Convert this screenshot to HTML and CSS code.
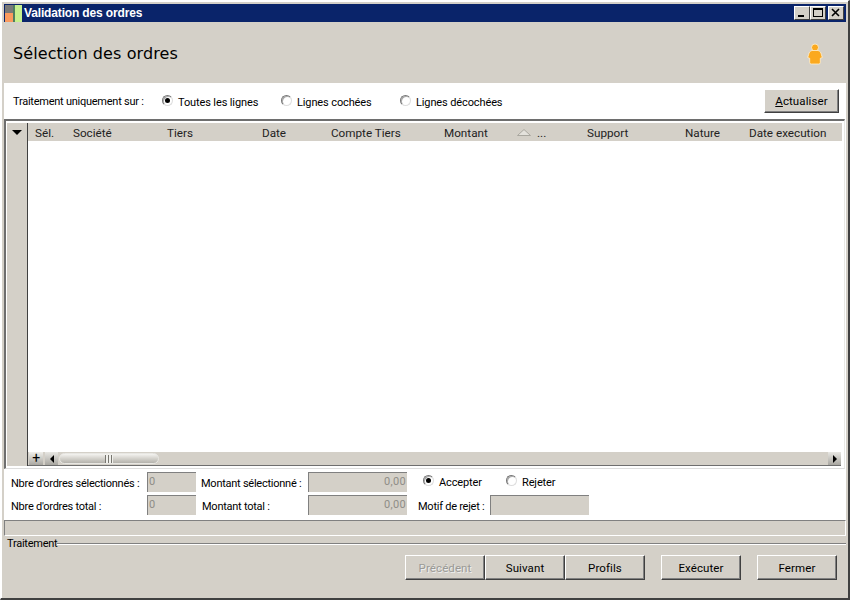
FILE: index.html
```html
<!DOCTYPE html>
<html lang="fr">
<head>
<meta charset="utf-8">
<title>Validation des ordres</title>
<link rel="stylesheet" href="styles.css">
</head>
<body>
<div class="window">
  <div class="titlebar">
    <svg class="appicon" width="17" height="17" viewBox="0 0 17 17"><rect width="8" height="8" fill="#7a7a78"/><rect y="8" width="8" height="9" fill="#fb9a5e"/><rect x="8" width="3" height="17" fill="#4f7f5f"/><rect x="10" width="7" height="17" fill="#c6f08e"/></svg>
    <span class="title">Validation des ordres</span>
    <div class="wincontrols">
      <span class="wbtn"><svg width="16" height="14" viewBox="0 0 16 14"><rect x="4" y="9" width="6" height="2" fill="#000"/></svg></span>
      <span class="wbtn"><svg width="16" height="14" viewBox="0 0 16 14"><rect x="3.5" y="2.500" width="9" height="8" fill="none" stroke="#000"/><rect x="3" y="2" width="10" height="2" fill="#000"/></svg></span>
      <span class="wbtn wbtn-close"><svg width="16" height="14" viewBox="0 0 16 14"><path d="M4 3l7 7M11 3l-7 7" stroke="#000" stroke-width="1.6" fill="none"/></svg></span>
    </div>
  </div>
  <div class="header">
    <h1>Sélection des ordres</h1>
    <svg class="person" width="18" height="22" viewBox="0 0 18 22"><circle cx="9" cy="4.500" r="3.500" fill="#fba91f" stroke="#fff0d0" stroke-width=".8"/><path d="M6 7.500h6c2 .5 3 2 3.300 3.800l1 3.200-2 .8v4.200a1.500 1.500 0 0 1-1.500 1.500H5.200a1.500 1.500 0 0 1-1.500-1.500v-4.200l-2-.8 1-3.200C3 9.500 4 8 6 7.500z" fill="#fba91f" stroke="#fff0d0" stroke-width=".8"/></svg>
  </div>
  <div class="main">
    <div class="options">
      <span class="opt-label">Traitement uniquement sur :</span>
      <label class="radio radio-a"><span class="dot on"></span>Toutes les lignes</label>
      <label class="radio radio-b"><span class="dot"></span>Lignes cochées</label>
      <label class="radio radio-c"><span class="dot"></span>Lignes décochées</label>
      <button class="btn btn-refresh"><u>A</u>ctualiser</button>
    </div>
    <div class="grid">
      <div class="gutter"><span class="menu-tri"></span></div>
      <div class="table">
        <div class="thead">
          <span>Sél.</span><span>Société</span><span>Tiers</span><span>Date</span><span>Compte Tiers</span><span>Montant</span>
          <span class="sort"><svg width="14" height="7" viewBox="0 0 14 7"><path d="M7 .5L13.500 6.500H.5z" fill="#e4e2dc" stroke="#a9a79f"/></svg></span><span class="more">...</span><span>Support</span><span>Nature</span><span>Date execution</span>
        </div>
        <div class="tbody"></div>
        <div class="hscroll">
          <span class="plus">+</span>
          <span class="sbtn"><i class="arrow-left"></i></span>
          <span class="thumb"><i></i></span>
          <span class="sbtn sbtn-right"><i class="arrow-right"></i></span>
        </div>
      </div>
    </div>
    <div class="form">
      <span class="lbl">Nbre d'ordres sélectionnés :</span>
      <span class="field">0</span>
      <span class="lbl lbl-m1">Montant sélectionné :</span>
      <span class="field num">0,00</span>
      <div class="decision">
        <label class="radio radio-acc"><span class="dot on"></span>Accepter</label>
        <label class="radio"><span class="dot"></span>Rejeter</label>
      </div>
      <span class="lbl">Nbre d'ordres total :</span>
      <span class="field">0</span>
      <span class="lbl lbl-m2">Montant total :</span>
      <span class="field num">0,00</span>
      <span class="lbl lbl-motif">Motif de rejet :</span>
      <span class="field"></span>
    </div>
  </div>
  <div class="status"></div>
  <div class="group"><span>Traitement</span><i></i></div>
  <div class="actions">
    <button class="btn btn-act" disabled>Précédent</button>
    <button class="btn btn-act">Suivant</button>
    <button class="btn btn-act">Profils</button>
    <button class="btn btn-act btn-gap">Exécuter</button>
    <button class="btn btn-act btn-gap">Fermer</button>
  </div>
</div>
</body>
</html>
```
FILE: styles.css
```css
* { box-sizing: border-box; }
html, body { margin: 0; padding: 0; }
body { width: 850px; height: 600px; overflow: hidden; background: #d4d0c8; font: 11px Roboto, "Liberation Sans", Arial, sans-serif; letter-spacing: -.25px; color: #000; }
.window { width: 850px; height: 600px; display: flex; flex-direction: column; background: #d4d0c8; border-style: solid; border-width: 1px 2px 2px 1px; border-color: #fff #404040 #404040 #fff; box-shadow: inset 1px 1px 0 #fff; padding: 3px 2px 0 3px; }
.titlebar { height: 18px; flex: none; display: flex; align-items: center; background: #0a246a; color: #fff; padding: 0 2px 0 1px; }
.appicon { flex: none; }
.title { font: bold 12px "Liberation Sans", Arial, sans-serif; letter-spacing: -.15px; margin-left: 2px; }
.wincontrols { margin-left: auto; display: flex; }
.wbtn { width: 16px; height: 14px; background: #d4d0c8; border: 1px solid; border-color: #fff #404040 #404040 #fff; display: flex; align-items: center; justify-content: center; overflow: hidden; }
.wbtn svg { flex: none; }
.wbtn-close { margin-left: 2px; }
.header { height: 61px; flex: none; display: flex; align-items: center; justify-content: space-between; padding: 0 22px 0 9px; }
h1 { margin: 1px 0 0; font: normal 16px "DejaVu Sans", sans-serif; letter-spacing: .1px; }
.person { margin-top: 2px; }
.main { height: 437px; flex: none; background: #fff; display: flex; flex-direction: column; }
.options { height: 36px; flex: none; display: flex; align-items: center; padding: 0 7px 0 9px; }
.opt-label { width: 149px; margin-top: 1px; white-space: nowrap; }
.radio { display: inline-flex; align-items: center; padding-top: 3px; white-space: nowrap; letter-spacing: -.12px; }
.radio-a { width: 119px; }
.radio-b { width: 119px; }
.dot { width: 11px; height: 11px; border-radius: 50%; border: 1px solid; border-color: #777 #ddd #ddd #777; box-shadow: inset 1px 1px 0 #aaa; margin-right: 5px; margin-top: -5px; position: relative; background: #fff; flex: none; }
.dot.on::after { content: ""; position: absolute; left: 2px; top: 2px; width: 5px; height: 5px; border-radius: 50%; background: #000; }
.btn { font: 11.5px Roboto, "Liberation Sans", Arial, sans-serif; letter-spacing: .1px; background: #d4d0c8; color: #000; border: 1px solid; border-color: #fff #404040 #404040 #fff; box-shadow: inset -1px -1px 0 #808080; padding: 0; }
.btn:disabled { color: #9a9a96; text-shadow: 1px 1px 0 #eee; }
.btn-refresh { margin-left: auto; width: 75px; height: 24px; }
.grid { height: 350px; flex: none; display: flex; margin-right: 1px; padding: 2px 2px 2px 1px; border-top: 2px solid #6e6e6e; border-left: 2px solid #6e6e6e; border-right: 1px solid #e8e8e4; border-bottom: 1px solid #ddd; }
.gutter { width: 20px; flex: none; background: #d4d0c8; position: relative; display: flex; justify-content: center; padding-top: 7px; }
.menu-tri { width: 0; height: 0; border-left: 5px solid transparent; border-right: 5px solid transparent; border-top: 5px solid #000; }
.table { flex: 1; display: flex; flex-direction: column; border-left: 1px solid #404040; min-width: 0; }
.thead { height: 18px; flex: none; background: #d4d0c8; display: grid; grid-template-columns: 38px 94px 95px 69px 113px 73px 20px 50px 98px 64px 1fr; align-items: center; padding-left: 7px; font-size: 11.7px; letter-spacing: 0; color: #222; }
.thead span { padding-top: 1px; }
.sort { display: flex; }
.tbody { flex: 1; background: #fff; }
.hscroll { height: 14px; flex: none; background: #d4d0c8; border-bottom: 1px solid #6e6e6e; display: flex; align-items: stretch; margin-right: 1px; }
.plus { width: 14px; margin-left: 1px; background: linear-gradient(#f0efeb, #aaa8a2); font-size: 14px; line-height: 13px; text-align: center; color: #000; }
.sbtn { width: 13px; margin-left: 2px; background: linear-gradient(#e8e7e3, #a8a6a0); display: flex; align-items: center; justify-content: center; }
.sbtn-right { margin-left: auto; }
.arrow-left { border-top: 4px solid transparent; border-bottom: 4px solid transparent; border-right: 4px solid #000; }
.arrow-right { border-top: 4px solid transparent; border-bottom: 4px solid transparent; border-left: 4px solid #000; }
.thumb { width: 100px; margin: 1px 0 1px 1px; border-radius: 6px; background: linear-gradient(#f4f3f0, #d4d2cc 50%, #b4b2ac); border: 1px solid #e8e7e3; display: flex; align-items: center; justify-content: center; }
.thumb i { width: 8px; height: 8px; background: repeating-linear-gradient(90deg, #77756f 0 1px, #f0f0ec 1px 3px); }
.form { flex: 1; display: grid; grid-template-columns: 136px 49px 112px 99px 83px 99px; grid-auto-rows: 20px; row-gap: 3px; padding: 3px 0 0 7px; align-items: center; }
.lbl { white-space: nowrap; padding-top: 2px; }
.lbl-m1 { padding-left: 5px; }
.lbl-m2 { padding-left: 6px; }
.lbl-motif { padding-left: 11px; }
.field { height: 20px; background: #d4d0c8; border-top: 1px solid #808080; border-left: 1px solid #808080; color: #8f8d87; line-height: 18px; letter-spacing: .3px; padding-left: 1px; }
.num { text-align: right; padding-right: 1px; }
.decision { grid-column: span 2; display: flex; padding-left: 16px; margin-top: -2px; }
.radio-acc { width: 83px; }
.status { height: 16px; flex: none; background: #d4d0c8; border-top: 1px solid #808080; border-left: 1px solid #808080; border-bottom: 1px solid #fff; border-right: 1px solid #fff; }
.group { height: 13px; flex: none; display: flex; align-items: center; padding-left: 3px; margin-top: 1px; }
.group i { flex: 1; height: 2px; background: #808080; border-bottom: 1px solid #fff; }
.actions { display: flex; padding: 5px 9px 0 0; justify-content: flex-end; }
.btn-act { width: 80px; height: 25px; }
.btn-gap { margin-left: 16px; }
```
